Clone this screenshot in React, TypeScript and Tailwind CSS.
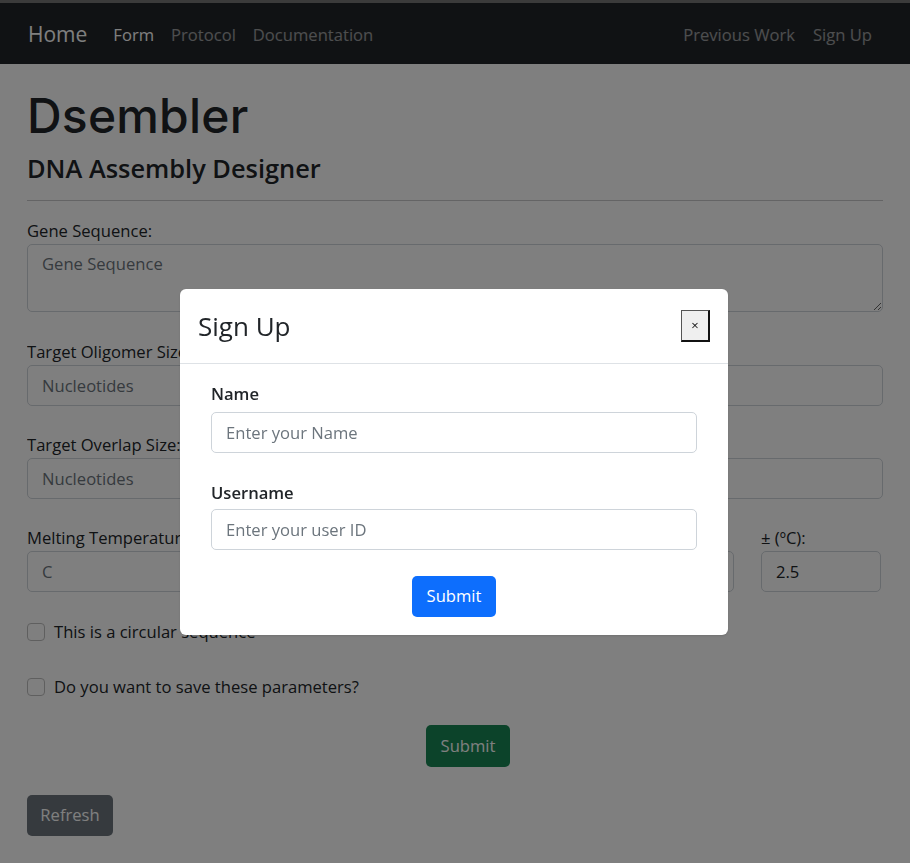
import React from "react";

const fieldCls =
  "block w-full h-[41px] rounded-[5px] border border-[#ced4da] bg-white px-[14px] text-[16.6px] text-[#212529] placeholder:text-[#6c757d] outline-none";

function Field({ label, placeholder, value }: { label: string; placeholder?: string; value?: string }) {
  return (
    <div>
      <label className="block h-[26px] leading-[26px] whitespace-nowrap overflow-hidden">{label}</label>
      <input className={fieldCls} placeholder={placeholder} defaultValue={value} readOnly />
    </div>
  );
}

function Check({ label }: { label: string }) {
  return (
    <div className="flex items-center h-[26px] gap-[9px]">
      <span className="w-[18px] h-[18px] rounded-[4px] border border-[#bfbfbf] bg-white shrink-0" />
      <span>{label}</span>
    </div>
  );
}

export default function App() {
  return (
    <div className="relative min-h-screen bg-white font-['Open_Sans','Noto_Sans',sans-serif] text-[16.6px] text-[#212529]">
      <nav className="h-[64px] bg-[#212529] border-t-[3px] border-[#767676] flex items-center pl-[28px] pr-[29px] pt-[3px]">
        <span className="text-[21px] text-white mr-[17px]">Home</span>
        <span className="px-[9px] text-white">Form</span>
        <span className="px-[8px] text-white/55">Protocol</span>
        <span className="px-[9px] text-white/55">Documentation</span>
        <div className="ml-auto flex">
          <span className="px-[9px] text-white/55">Previous Work</span>
          <span className="px-[9px] text-white/55">Sign Up</span>
        </div>
      </nav>

      <main className="px-[27px] pt-[24px]">
        <h1 className="font-['Inter',sans-serif] font-medium text-[48px] leading-[56px] tracking-[0.2px]">Dsembler</h1>
        <h4 className="mt-[8px] text-[25.4px] font-semibold leading-[32px]">DNA Assembly Designer</h4>
        <hr className="mt-[16px] border-t border-[#c8c9ca]" />

        <div className="mt-[17px]">
          <label className="block h-[26px] leading-[26px]">Gene Sequence:</label>
          <textarea
            className="block w-full h-[68px] rounded-[5px] border border-[#ced4da] bg-white px-[14px] py-[7px] text-[16.6px] placeholder:text-[#6c757d] outline-none resize-y"
            placeholder="Gene Sequence"
            readOnly
          />
        </div>

        <div className="mt-[27px]">
          <Field label="Target Oligomer Size:" placeholder="Nucleotides" />
        </div>
        <div className="mt-[26px]">
          <Field label="Target Overlap Size:" placeholder="Nucleotides" />
        </div>

        <div className="mt-[26px] grid grid-cols-[340px_340px_120px] gap-x-[27px]">
          <Field label="Melting Temperature (ºC):" placeholder="C" />
          <Field label="Oligo Concentration (nM):" placeholder="nM" />
          <Field label="± (ºC):" value="2.5" />
        </div>

        <div className="mt-[27px]">
          <Check label="This is a circular sequence" />
        </div>
        <div className="mt-[29px]">
          <Check label="Do you want to save these parameters?" />
        </div>

        <div className="mt-[25px] flex justify-center pl-[26px]">
          <button className="h-[42px] w-[84px] rounded-[5px] bg-[#198754] text-white">Submit</button>
        </div>
        <div className="mt-[28px]">
          <button className="h-[41px] w-[86px] rounded-[5px] bg-[#6c757d] text-white">Refresh</button>
        </div>
      </main>

      <div className="fixed inset-0 bg-black/50 flex justify-start items-start pt-[289px] pl-[180px]">
        <div className="w-[548px] bg-white rounded-[6px] shadow-sm">
          <div className="h-[75px] flex items-center justify-between pl-[18px] pr-[18px] border-b border-[#dee2e6]">
            <h5 className="text-[26px] font-medium leading-[32px] text-[#212529]">Sign Up</h5>
            <button className="w-[29px] h-[32px] flex items-center justify-center bg-[#efefef] border-t border-l border-[#555] border-r-2 border-b-2 border-r-[#111] border-b-[#111] text-[13px] text-[#111] leading-none">
              ×
            </button>
          </div>
          <div className="px-[31px] pt-[17px] pb-[18px]">
            <label className="block h-[31px] leading-[26px] font-semibold">Name</label>
            <input className={fieldCls} placeholder="Enter your Name" readOnly />
            <label className="block mt-[27px] h-[29px] leading-[26px] font-semibold">Username</label>
            <input className={fieldCls} placeholder="Enter your user ID" readOnly />
            <div className="mt-[26px] flex justify-center">
              <button className="h-[41px] w-[84px] rounded-[5px] bg-[#0d6efd] text-white">Submit</button>
            </div>
          </div>
        </div>
      </div>
    </div>
  );
}
